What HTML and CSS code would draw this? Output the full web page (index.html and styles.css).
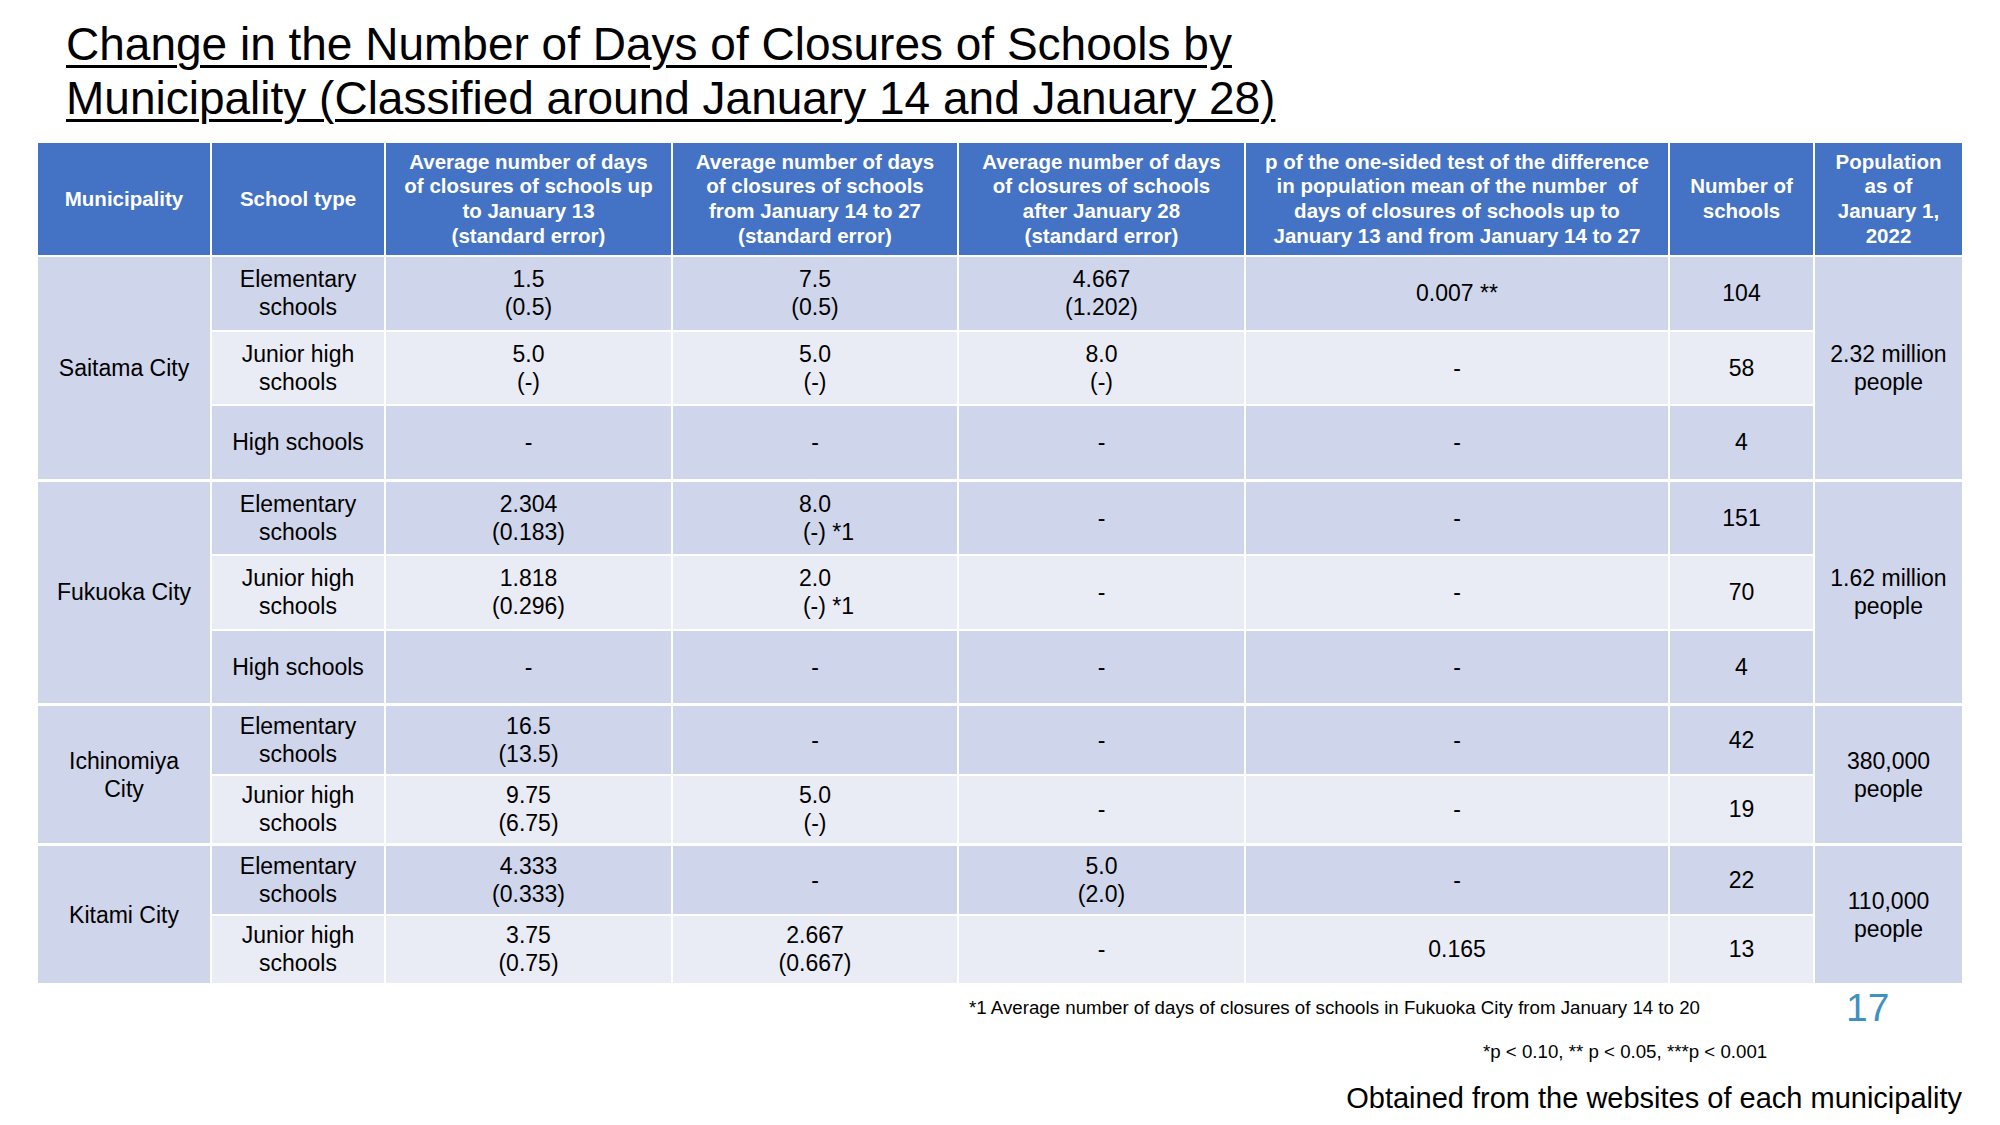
FILE: index.html
```html
<!DOCTYPE html>
<html lang="en">
<head>
<meta charset="utf-8">
<title>Change in the Number of Days of Closures of Schools by Municipality</title>
<link rel="stylesheet" href="styles.css">
</head>
<body>
<div class="slide">
  <h1 class="title">Change in the Number of Days of Closures of Schools by<br>Municipality (Classified around January 14 and January 28)</h1>

  <table class="data">
    <colgroup>
      <col class="c-muni"><col class="c-type"><col class="c-avg1"><col class="c-avg2"><col class="c-avg3"><col class="c-p"><col class="c-num"><col class="c-pop">
    </colgroup>
    <thead>
      <tr class="head">
        <th>Municipality</th>
        <th>School type</th>
        <th>Average number of days<br>of closures of schools up<br>to January 13<br>(standard error)</th>
        <th>Average number of days<br>of closures of schools<br>from January 14 to 27<br>(standard error)</th>
        <th>Average number of days<br>of closures of schools<br>after January 28<br>(standard error)</th>
        <th>p of the one-sided test of the difference<br>in population mean of the number&nbsp; of<br>days of closures of schools up to<br>January 13 and from January 14 to 27</th>
        <th>Number of<br>schools</th>
        <th>Population<br>as of<br>January 1,<br>2022</th>
      </tr>
    </thead>
    <tbody>
      <tr class="big dark">
        <td class="dark" rowspan="3">Saitama City</td>
        <td>Elementary<br>schools</td>
        <td>1.5<br>(0.5)</td>
        <td>7.5<br>(0.5)</td>
        <td>4.667<br>(1.202)</td>
        <td>0.007 **</td>
        <td>104</td>
        <td class="dark" rowspan="3">2.32 million<br>people</td>
      </tr>
      <tr class="big light">
        <td>Junior high<br>schools</td>
        <td>5.0<br>(-)</td>
        <td>5.0<br>(-)</td>
        <td>8.0<br>(-)</td>
        <td>-</td>
        <td>58</td>
      </tr>
      <tr class="big dark">
        <td>High schools</td>
        <td>-</td>
        <td>-</td>
        <td>-</td>
        <td>-</td>
        <td>4</td>
      </tr>

      <tr class="big dark grp">
        <td class="dark" rowspan="3">Fukuoka City</td>
        <td>Elementary<br>schools</td>
        <td>2.304<br>(0.183)</td>
        <td>8.0<br><span class="shift">(-) *1</span></td>
        <td>-</td>
        <td>-</td>
        <td>151</td>
        <td class="dark" rowspan="3">1.62 million<br>people</td>
      </tr>
      <tr class="big light">
        <td>Junior high<br>schools</td>
        <td>1.818<br>(0.296)</td>
        <td>2.0<br><span class="shift">(-) *1</span></td>
        <td>-</td>
        <td>-</td>
        <td>70</td>
      </tr>
      <tr class="big dark">
        <td>High schools</td>
        <td>-</td>
        <td>-</td>
        <td>-</td>
        <td>-</td>
        <td>4</td>
      </tr>

      <tr class="small dark grp">
        <td class="dark" rowspan="2">Ichinomiya<br>City</td>
        <td>Elementary<br>schools</td>
        <td>16.5<br>(13.5)</td>
        <td>-</td>
        <td>-</td>
        <td>-</td>
        <td>42</td>
        <td class="dark" rowspan="2">380,000<br>people</td>
      </tr>
      <tr class="small light">
        <td>Junior high<br>schools</td>
        <td>9.75<br>(6.75)</td>
        <td>5.0<br>(-)</td>
        <td>-</td>
        <td>-</td>
        <td>19</td>
      </tr>

      <tr class="small dark grp">
        <td class="dark" rowspan="2">Kitami City</td>
        <td>Elementary<br>schools</td>
        <td>4.333<br>(0.333)</td>
        <td>-</td>
        <td>5.0<br>(2.0)</td>
        <td>-</td>
        <td>22</td>
        <td class="dark" rowspan="2">110,000<br>people</td>
      </tr>
      <tr class="small light">
        <td>Junior high<br>schools</td>
        <td>3.75<br>(0.75)</td>
        <td>2.667<br>(0.667)</td>
        <td>-</td>
        <td>0.165</td>
        <td>13</td>
      </tr>
    </tbody>
  </table>

  <div class="foot">
    <div class="foot-row-a">
      <p class="note note-1">*1 Average number of days of closures of schools in Fukuoka City from January 14 to 20</p>
      <span class="page-num">17</span>
    </div>
    <p class="note note-2">*p &lt; 0.10, ** p &lt; 0.05, ***p &lt; 0.001</p>
    <p class="source">Obtained from the websites of each municipality</p>
  </div>
</div>
</body>
</html>
```

FILE: styles.css
```css
* {
  box-sizing: border-box;
}

html, body {
  margin: 0;
  padding: 0;
  background: #ffffff;
}

body {
  font-family: "Liberation Sans", Arial, Helvetica, sans-serif;
  color: #000000;
}

.slide {
  width: 2000px;
  height: 1125px;
  overflow: hidden;
}

.title {
  margin: 17px 0 0 66px;
  font-size: 46px;
  line-height: 54px;
  font-weight: 400;
  text-decoration: underline;
  text-decoration-thickness: 3px;
  text-underline-offset: 5px;
}

/* ---------- table ---------- */
.data {
  margin: 16px 0 0 36px;
  border-collapse: separate;
  border-spacing: 2px;
  table-layout: fixed;
  width: 1928px;
}

.c-muni { width: 172px; }
.c-type { width: 172px; }
.c-avg1 { width: 285px; }
.c-avg2 { width: 284px; }
.c-avg3 { width: 285px; }
.c-p    { width: 422px; }
.c-num  { width: 143px; }
.c-pop  { width: 147px; }

.data th,
.data td {
  padding: 0 4px;
  text-align: center;
  vertical-align: middle;
}

.data th {
  background: #4472c4;
  color: #ffffff;
  font-weight: 700;
  font-size: 20.5px;
  line-height: 24.6px;
}

.head {
  height: 112px;
}

.data td {
  font-size: 23px;
  line-height: 28px;
  font-weight: 400;
}

.big { height: 72.5px; }
.small { height: 67.5px; }

.dark td { background: #cfd5ea; }
.light td { background: #e9ebf5; }
.data td.dark { background: #cfd5ea; }

.grp td {
  border-top: 1px solid #ffffff;
}

.grp.big { height: 73.5px; }
.grp.small { height: 68.5px; }

.shift {
  padding-left: 27px;
}

/* ---------- footer ---------- */
.foot {
  display: flex;
  flex-direction: column;
}

.foot-row-a {
  display: flex;
  align-items: center;
  margin-top: 3px;
  height: 39px;
}

.note {
  margin: 0;
  font-size: 18.7px;
  line-height: 22px;
}

.note-1 {
  margin-left: 969px;
  width: 877px;
}

.page-num {
  font-size: 39px;
  line-height: 39px;
  color: #4190c2;
}

.note-2 {
  margin-top: 14px;
  margin-left: 1483px;
}

.source {
  margin: 18px 0 0 0;
  padding-right: 38px;
  text-align: right;
  font-size: 29px;
  line-height: 34px;
}
```
